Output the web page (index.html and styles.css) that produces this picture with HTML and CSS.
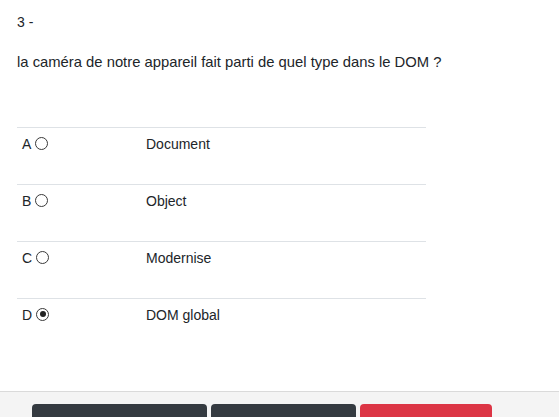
FILE: index.html
```html
<!DOCTYPE html>
<html lang="fr">
<head>
<meta charset="utf-8">
<title>Question 3</title>
<link rel="stylesheet" href="styles.css">
</head>
<body>
<div class="page">
  <main class="quiz">
    <p class="num">3 -</p>
    <p class="question">la caméra de notre appareil fait parti de quel type dans le DOM ?</p>
    <div class="answers">
      <div class="row"><div class="letter">A <span class="radio"></span></div><div class="label">Document</div></div>
      <div class="row"><div class="letter">B <span class="radio"></span></div><div class="label">Object</div></div>
      <div class="row"><div class="letter">C <span class="radio"></span></div><div class="label">Modernise</div></div>
      <div class="row"><div class="letter">D <span class="radio checked"></span></div><div class="label">DOM global</div></div>
    </div>
  </main>
  <footer class="bar">
    <button class="btn dark b1"><svg class="ic" viewBox="0 0 16 16" width="14" height="14"><circle cx="8" cy="8" r="6" fill="none" stroke="#cfd3d6" stroke-width="1.5"/></svg><span>Précédent</span></button>
    <button class="btn dark b2"><span>Suivant</span><svg class="ic" viewBox="0 0 16 16" width="14" height="14"><circle cx="8" cy="8" r="6" fill="none" stroke="#cfd3d6" stroke-width="1.5"/></svg></button>
    <button class="btn red b3"><span>Terminer</span><svg class="ic" viewBox="0 0 16 16" width="14" height="14"><path d="M5 1v4M10 1v4" stroke="#f5c6cb" stroke-width="1.5"/></svg></button>
  </footer>
</div>
</body>
</html>
```

FILE: styles.css
```css
html, body {
  margin: 0;
  padding: 0;
  background: #fff;
}
body {
  font-family: "Liberation Sans", Arial, sans-serif;
  font-size: 14px;
  color: #212529;
  overflow: hidden;
}
.page {
  height: 417px;
  display: flex;
  flex-direction: column;
}
.quiz {
  padding: 14px 0 0 17px;
  flex: 1;
}
.num {
  margin: 0;
  line-height: 16px;
}
.question {
  margin: 24px 0 0;
  line-height: 16px;
  font-size: 14.8px;
}
.answers {
  margin-top: 57px;
  width: 409px;
}
.row {
  display: flex;
  border-top: 1px solid #dee2e6;
  padding-top: 8px;
  height: 48px;
}
.letter {
  width: 124px;
  padding-left: 5px;
  display: flex;
  align-items: center;
  height: 16px;
  gap: 4px;
}
.label {
  line-height: 16px;
}
.radio {
  width: 13px;
  height: 13px;
  border: 1px solid #3a3a3a;
  border-radius: 50%;
  display: inline-block;
  box-sizing: border-box;
  position: relative;
  margin-top: -2px;
}
.radio.checked::after {
  content: "";
  position: absolute;
  left: 2.5px;
  top: 2.5px;
  width: 6px;
  height: 6px;
  border-radius: 50%;
  background: #222;
}
.bar {
  height: 13px;
  border-top: 1px solid #dadada;
  background: #f4f4f4;
  display: flex;
  gap: 4px;
  padding: 12px 0 0 32px;
  overflow: hidden;
  flex: none;
}
.btn {
  height: 38px;
  border: none;
  border-radius: 4px;
  color: #fff;
  font-family: inherit;
  font-size: 13px;
  display: flex;
  align-items: flex-end;
  justify-content: space-between;
  padding: 0 14px;
  flex: none;
}
.btn span { display: none; }
.ic { margin-bottom: 11px; }
.dark { background: #343a40; }
.red { background: #dc3545; }
.b1 { width: 175px; }
.b2 { width: 145px; justify-content: flex-end; padding-right: 14px; }
.b3 { width: 132px; justify-content: flex-end; padding-right: 14px; }
```
